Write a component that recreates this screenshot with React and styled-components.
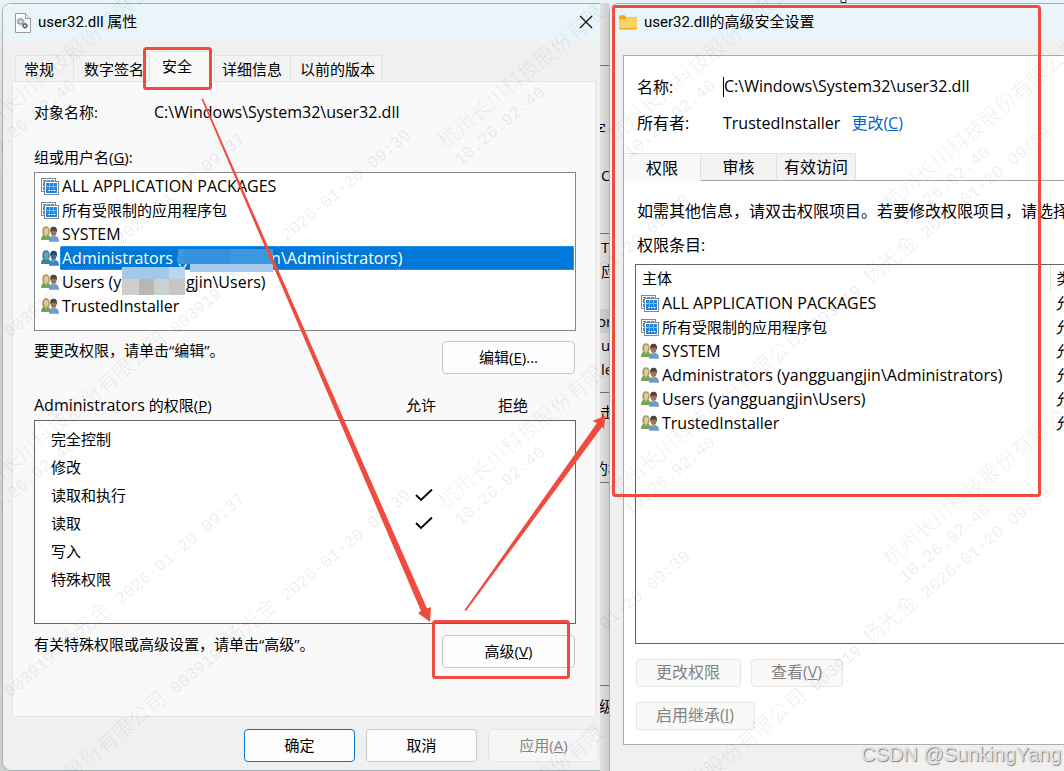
import React, { useState } from 'react';
import styled, { createGlobalStyle, css } from 'styled-components';

const GlobalStyle = createGlobalStyle`
  * {
    box-sizing: border-box;
  }

  body {
    margin: 0;
    overflow: hidden;
    font-family: "Open Sans", "Noto Sans CJK SC", sans-serif;
    font-size: 15px;
    line-height: 20px;
    color: #000;
  }

  button, input {
    font: inherit;
    color: inherit;
  }
`;

const Desktop = styled.div`
  position: relative;
  display: grid;
  grid-template-columns: minmax(0, 598fr) 9px minmax(0, 455fr);
  min-height: 100vh;
  padding: 3px 0 0 2px;
  overflow: hidden;
  background: linear-gradient(#e4f4f7 4px, #ececec 14px, #d0d0d0 180px);
`;

/* ---------- window chrome ---------- */

const Window = styled.section`
  display: flex;
  flex-direction: column;
  min-width: 0;
  overflow: hidden;
  background: #f0f0f0;
  border: 1px solid #a9b0b2;
  border-right: none;
  border-radius: 9px 0 0 ${({ $cornered }) => ($cornered ? '9px' : '0')};
  border-bottom-width: ${({ $cornered }) => ($cornered ? '1px' : '0')};
`;

const TitleBar = styled.header`
  display: flex;
  align-items: center;
  flex: none;
  height: 37px;
  padding: 0 7px 0 ${({ $inset }) => $inset}px;
  background: #e9f5f8;
`;

const Title = styled.h1`
  flex: 1;
  margin: 0 0 0 7px;
  padding-bottom: 2px;
  font-family: Roboto, "Noto Sans CJK SC", sans-serif;
  font-size: 15px;
  font-weight: 400;
  white-space: nowrap;
`;

const CloseButton = styled.button`
  display: flex;
  padding: 0 0 2px;
  border: none;
  background: none;
`;

/* ---------- tabs ---------- */

const PropertyTabs = styled.nav`
  display: grid;
  grid-template-columns: 59px 76px 65px 76px 91px;
  align-items: end;
  flex: none;
  height: 41px;
  margin-bottom: -1px;
  padding-left: 12px;
`;

const PropertyTab = styled.button`
  height: 27px;
  padding: 0 0 0 ${({ $pad }) => $pad}px;
  border: 1px solid #e2e2e2;
  border-left: none;
  background: #f3f3f3;
  text-align: left;
  white-space: nowrap;

  &:first-child {
    border-left: 1px solid #e2e2e2;
  }

  ${({ $active }) =>
    $active &&
    css`
      position: relative;
      height: 31px;
      padding-bottom: 2px;
      border-bottom-color: #f9f9f9;
      background: #f9f9f9;
    `}
`;

const SecurityTabs = styled.nav`
  display: grid;
  grid-template-columns: 77px 76px 79px 1fr;
  height: 28px;
  margin-top: 12px;
  font-size: 16px;

  &::after {
    content: "";
    border-bottom: 1px solid #a5a5a5;
  }
`;

const SecurityTab = styled.button`
  padding: 0;
  border: 1px solid #e0e0e0;
  border-left: none;
  border-bottom-color: #a5a5a5;
  background: #f3f3f3;
  white-space: nowrap;

  ${({ $active }) =>
    $active &&
    css`
      padding-top: 2px;
      border-bottom-color: #f9f9f9;
      background: #f9f9f9;
    `}
`;

/* ---------- properties window ---------- */

// western text runs a size larger than the Chinese labels
const Latin = styled.span`
  font-size: 16px;
`;

const PropertyPanel = styled.main`
  display: flex;
  flex-direction: column;
  margin: 0 4px 0 9px;
  padding: 19px 19px 48px 21px;
  border: 1px solid #e4e4e4;
  background: #f9f9f9;
`;

const ObjectRow = styled.div`
  display: grid;
  grid-template-columns: 120px 1fr;
  line-height: 22px;
`;

const GroupLabel = styled.div`
  margin: 23px 0 4px;
  line-height: 22px;
`;

const GroupList = styled.ul`
  min-height: 159px;
  margin: 0;
  padding: 1px 1px 0 6px;
  border: 1px solid #828790;
  background: #fff;
  list-style: none;
`;

const GroupItem = styled.li`
  display: flex;
  align-items: center;
  gap: 1px;
  height: 24px;
`;

const GroupName = styled.span`
  flex: 1;
  height: 24px;
  padding-left: 1px;
  border: 1px dotted ${({ $selected }) => ($selected ? '#e88a2c' : 'transparent')};
  background: ${({ $selected }) => ($selected ? '#0078d7' : 'transparent')};
  color: ${({ $selected }) => ($selected ? '#fff' : '#000')};
  line-height: 22px;
  white-space: nowrap;
`;

const HintRow = styled.div`
  display: flex;
  justify-content: space-between;
  align-items: flex-start;
  margin-top: ${({ $top }) => $top}px;
  padding-right: 1px;
`;

const Hint = styled.p`
  margin: 0;
  line-height: 18px;
`;

const Button = styled.button`
  width: ${({ $wide }) => ($wide ? '133px' : '111px')};
  height: 33px;
  padding: 0 0 2px;
  border: 1px solid ${({ $primary }) => ($primary ? '#0078d4' : '#c8c8c8')};
  border-radius: 4px;
  background: #fdfdfd;

  &:disabled {
    border-color: #e6e6e6;
    background: #f6f6f6;
    color: #838383;
  }
`;

const PermissionHead = styled.div`
  display: grid;
  grid-template-columns: 1fr 92px 92px 17px;
  margin: 20px 0 4px;
  line-height: 22px;
`;

const HeadCell = styled.span`
  text-align: center;
`;

const PermissionBox = styled.div`
  min-height: 204px;
  padding: 4px 16px 0;
  border: 1px solid #646464;
  background: #fff;
`;

const PermissionTable = styled.table`
  width: 100%;
  border-collapse: collapse;
  table-layout: fixed;

  td {
    width: 92px;
    height: 28px;
    padding: 0 0 0 5px;
    text-align: center;
  }

  td:first-child {
    width: auto;
    padding: 0;
    text-align: left;
  }

  svg {
    display: block;
    margin: 0 auto;
  }
`;

const Footer = styled.footer`
  display: flex;
  justify-content: flex-end;
  gap: 11px;
  padding: 12px 1px 8px;
`;

/* ---------- slice of the window behind ---------- */

const BehindSlice = styled.aside`
  display: flex;
  flex-direction: column;
  min-width: 0;
  overflow: hidden;
  background: linear-gradient(90deg, rgba(0, 0, 0, 0), rgba(0, 0, 0, 0.1)), #e2e2e2;
`;

const SliceRow = styled.div`
  flex: none;
  height: ${({ $height }) => $height}px;
  padding-left: 1px;
  overflow: hidden;
  border-bottom: ${({ $rule }) => ($rule ? '1px solid #6e6e6e' : 'none')};
  background: ${({ $shade }) => ($shade ? 'rgba(0, 0, 0, 0.08)' : 'none')};
  line-height: 24px;
  text-indent: ${({ $indent }) => $indent || 0}px;
  white-space: nowrap;
`;

/* ---------- advanced security window ---------- */

const SecurityPanel = styled.main`
  display: flex;
  flex-direction: column;
  min-width: 0;
  margin: 14px 0 0 13px;
  padding: 13px 0 14px;
  border: 1px solid #adadad;
  border-right: none;
  background: #fff;
`;

const InfoRow = styled.div`
  display: flex;
  align-items: center;
  height: 36px;
  padding: 0 0 1px 13px;
`;

const InfoLabel = styled.label`
  flex: none;
  width: 86px;
  font-size: 16px;
`;

const PathInput = styled.input`
  flex: 1;
  min-width: 0;
  height: 20px;
  padding: 0 0 1px;
  border: none;
  border-left: 1px solid #000;
  outline: none;
  background: none;
  font-size: 16px;
`;

const ChangeLink = styled.a`
  margin-left: 11px;
  color: #0066cc;
  font-size: 16px;
  text-decoration: none;
`;

const Note = styled.p`
  margin: ${({ $top }) => $top}px 0 0 13px;
  font-size: 16px;
  line-height: 22px;
  white-space: nowrap;
`;

const EntryBox = styled.div`
  min-height: 380px;
  margin: 8px 0 0 11px;
  overflow: hidden;
  border: 1px solid #646464;
  border-right: none;
`;

const EntryTable = styled.table`
  width: 100%;
  border-collapse: collapse;
  table-layout: fixed;
  white-space: nowrap;

  th {
    height: 26px;
    padding: 0 0 0 6px;
    font-weight: 400;
    text-align: left;
  }

  th:first-child {
    width: 414px;
    border-right: 1px solid #e2e2e2;
  }

  td {
    height: 24px;
    padding: 0 0 0 6px;
  }

  td:first-child {
    padding-left: 5px;
  }
`;

const Principal = styled.span`
  display: flex;
  align-items: center;
  gap: 3px;
`;

const ActionRow = styled.div`
  display: flex;
  gap: 10px;
  margin: 15px 0 0 12px;
`;

const ActionButton = styled.button`
  height: 28px;
  padding: 0 20px 2px 19px;
  border: 1px solid #e6e6e6;
  border-radius: 4px;
  background: #f9f9f9;
  color: #838383;
  font-size: 16px;
`;

/* ---------- overlays ---------- */

const Overlay = styled.svg`
  position: absolute;
  top: 0;
  left: 0;
  width: 1064px;
  height: 771px;
  pointer-events: none;
`;

const MarkText = styled.text`
  fill: rgba(0, 0, 0, 0.085);
  font-family: "Noto Sans CJK SC", sans-serif;
  font-size: 21px;
  font-weight: 300;
  white-space: pre;
`;

const MarkDigits = styled.tspan`
  font-family: "Liberation Mono", monospace;
  font-size: 17px;
`;

const Credit = styled.div`
  position: absolute;
  right: 3px;
  bottom: 5px;
  color: rgba(240, 240, 240, 0.9);
  font-family: "Liberation Sans", Arial, sans-serif;
  font-size: 20px;
  line-height: 24px;
  text-shadow: 1px 1px 1px rgba(0, 0, 0, 0.45), 0 0 1px rgba(0, 0, 0, 0.2);
`;

/* ---------- icons ---------- */

const DllIcon = () => (
  <svg width="16" height="20" viewBox="0 0 16 20">
    <path d="M.5 .5h10l5 5v14H.5z" fill="#fbfbfb" stroke="#9a9a9a" />
    <path d="M10.500 .5v5h5" fill="#ececec" stroke="#9a9a9a" />
    <circle cx="5.500" cy="8.500" r="2.200" fill="none" stroke="#93a4b3" strokeWidth="1.800" />
    <circle cx="5.500" cy="8.500" r="3.400" fill="none" stroke="#93a4b3" strokeWidth="1.200" strokeDasharray="1.300 1.370" />
    <circle cx="10" cy="12.800" r="1.700" fill="none" stroke="#5f6a75" strokeWidth="1.500" />
    <circle cx="10" cy="12.800" r="2.700" fill="none" stroke="#5f6a75" strokeWidth="1" strokeDasharray="1.060 1.060" />
  </svg>
);

const FolderIcon = () => (
  <svg width="18" height="15" viewBox="0 0 18 15">
    <path d="M0 1.500Q0 .3 1.200 .3H5.500L7.500 2.300H16.800Q18 2.300 18 3.500V8H0z" fill="#f2a81d" />
    <path d="M0 4.500H6L7.800 2.800H17Q18 2.800 18 3.800V13.200Q18 14.500 16.800 14.500H1.200Q0 14.500 0 13.200z" fill="#ffd361" />
    <path d="M0 13.200Q0 14.500 1.200 14.500H16.800Q18 14.500 18 13.200z" fill="#eda921" />
  </svg>
);

const CloseIcon = () => (
  <svg width="14" height="14" viewBox="0 0 14 14">
    <path d="M1 1L13 13M13 1L1 13" stroke="#111" strokeWidth="1.200" />
  </svg>
);

const PackageIcon = () => (
  <svg width="18" height="17" viewBox="0 0 18 17">
    <rect x=".5" y=".5" width="14" height="13" fill="#fff" stroke="#85888b" />
    <path d="M2 2h3v1H2zM6 2h3v1H6zM10 2h3v1h-3zM2 4h1v4H2zM2 9h1v3H2z" fill="#2b90e2" />
    <rect x="3.500" y="3.500" width="14" height="13" fill="#fff" stroke="#85888b" />
    <rect x="5" y="5" width="11" height="10" fill="#1e88e0" />
    <path d="M8.500 5v6M12.500 5v6M5 8.500h11" stroke="#79bcf2" />
    <path d="M7 12.500h2M10 12.500h1.500M12.500 12.500h2" stroke="#fff" />
  </svg>
);

const PeopleIcon = ({ selected }) => {
  const c = selected
    ? { hair: '#3f7f9c', face: '#6c9fb8', green: '#2d8a93', dark: '#1f4f78', skin: '#3d6d97', blue: '#3b86c9', shirt: '#79b1de' }
    : { hair: '#ad9a58', face: '#e3cba4', green: '#7aa44e', dark: '#54463b', skin: '#a3714c', blue: '#6c9bd0', shirt: '#a9c6e6' };
  return (
    <svg width="18" height="16" viewBox="0 0 18 16">
      <path d="M1.500 8.500Q.5 0 5 .2Q9.400 0 8.500 8.500z" fill={c.hair} />
      <path d="M0 14Q0 9.500 3 8.500L7 8.500Q9.500 9.500 9.500 14z" fill={c.green} />
      <path d="M3.500 7.500h3L5 11z" fill={c.face} />
      <ellipse cx="5.200" cy="5" rx="2.100" ry="3" fill={c.face} />
      <path d="M8 15.800Q7.500 10.800 11 10h3.500Q18 10.800 18 15.800z" fill={c.blue} />
      <path d="M11.500 9.500h2.200L12.600 12z" fill={c.shirt} />
      <ellipse cx="12.600" cy="6.300" rx="2.800" ry="3.800" fill={c.skin} />
      <path d="M9.400 6.500Q8.300 .7 12.500 .8Q16.900 .7 15.800 6.700Q15.200 4.500 13 4.600Q10.200 4.500 9.400 6.500z" fill={c.dark} />
    </svg>
  );
};

const CheckIcon = () => (
  <svg width="18" height="14" viewBox="0 0 18 14">
    <path d="M1 7L6 12L17 1.500" fill="none" stroke="#000" strokeWidth="1.800" />
  </svg>
);

/* ---------- data ---------- */

const tabs = [
  { name: '常规', pad: 8 },
  { name: '数字签名', pad: 10 },
  { name: '安全', pad: 12 },
  { name: '详细信息', pad: 7 },
  { name: '以前的版本', pad: 9 },
];

const groups = [
  { name: 'ALL APPLICATION PACKAGES', pack: true },
  { name: '所有受限制的应用程序包', pack: true, chinese: true },
  { name: 'SYSTEM' },
  { name: 'Administrators (yangguangjin\\Administrators)' },
  { name: 'Users (yangguangjin\\Users)' },
  { name: 'TrustedInstaller' },
];

const permissions = [
  { name: '完全控制' },
  { name: '修改' },
  { name: '读取和执行', allow: true },
  { name: '读取', allow: true },
  { name: '写入' },
  { name: '特殊权限' },
];

const sliceRows = [
  { height: 30 },
  { height: 33, rule: true },
  { height: 51 },
  { height: 24, text: '字', indent: -10 },
  { height: 22 },
  { height: 24, text: 'C' },
  { height: 46 },
  { height: 1, rule: true },
  { height: 1 },
  { height: 24, text: 'T' },
  { height: 24, text: '应' },
  { height: 26 },
  { height: 24, text: 'or', indent: -4, shade: true },
  { height: 24, text: 'u' },
  { height: 24, text: 'le' },
  { height: 12, rule: true },
  { height: 7 },
  { height: 24, text: '击', indent: -1 },
  { height: 32 },
  { height: 24, text: '的权', indent: -8 },
  { height: 3, rule: true },
  { height: 203, rule: true },
  { height: 8 },
  { height: 24, text: '级', indent: -2 },
];

// start point of every line, the address line sits just below it
const companyMarks = [
  { x: -25, y: 143 },
  { x: -25, y: 503 },
  { x: -25, y: 863 },
  { x: 445, y: 150, short: true },
  { x: 445, y: 510, short: true },
  { x: 445, y: 870, short: true },
  { x: 615, y: 143 },
  { x: 615, y: 500 },
  { x: 615, y: 860 },
  { x: 890, y: 210 },
  { x: 890, y: 567 },
];

const userMarks = [
  { x: 10, y: 338 },
  { x: 10, y: 698 },
];

const timeMarks = [
  { x: 605, y: 274 },
  { x: 605, y: 630 },
];

const Key = ({ children }) => <>(<u>{children}</u>)</>;

/* ---------- parts ---------- */

function GroupIcon({ group, selected }) {
  return group.pack ? <PackageIcon /> : <PeopleIcon selected={selected} />;
}

function GroupText({ group }) {
  return group.chinese ? group.name : <Latin>{group.name}</Latin>;
}

function PropertiesWindow() {
  const [selected, setSelected] = useState(3);

  return (
    <Window $cornered>
      <TitleBar $inset={12}>
        <DllIcon />
        <Title>user32.dll 属性</Title>
        <CloseButton aria-label="关闭"><CloseIcon /></CloseButton>
      </TitleBar>
      <PropertyTabs>
        {tabs.map((tab) => (
          <PropertyTab key={tab.name} $pad={tab.pad} $active={tab.name === '安全'}>
            {tab.name}
          </PropertyTab>
        ))}
      </PropertyTabs>
      <PropertyPanel>
        <ObjectRow>
          <span>对象名称:</span>
          <Latin>C:\Windows\System32\user32.dll</Latin>
        </ObjectRow>
        <GroupLabel>组或用户名<Key>G</Key>:</GroupLabel>
        <GroupList>
          {groups.map((group, index) => (
            <GroupItem key={group.name} onClick={() => setSelected(index)}>
              <GroupIcon group={group} selected={index === selected} />
              <GroupName $selected={index === selected}><GroupText group={group} /></GroupName>
            </GroupItem>
          ))}
        </GroupList>
        <HintRow $top={10}>
          <Hint>要更改权限，请单击“编辑”。</Hint>
          <Button $wide>编辑<Key>E</Key>...</Button>
        </HintRow>
        <PermissionHead>
          <span><Latin>Administrators</Latin> 的权限<Key>P</Key></span>
          <HeadCell>允许</HeadCell>
          <HeadCell>拒绝</HeadCell>
        </PermissionHead>
        <PermissionBox>
          <PermissionTable>
            <tbody>
              {permissions.map((item) => (
                <tr key={item.name}>
                  <td>{item.name}</td>
                  <td>{item.allow && <CheckIcon />}</td>
                  <td />
                </tr>
              ))}
            </tbody>
          </PermissionTable>
        </PermissionBox>
        <HintRow $top={11}>
          <Hint>有关特殊权限或高级设置，请单击“高级”。</Hint>
          <Button $wide>高级<Key>V</Key></Button>
        </HintRow>
      </PropertyPanel>
      <Footer>
        <Button $primary>确定</Button>
        <Button>取消</Button>
        <Button disabled>应用<Key>A</Key></Button>
      </Footer>
    </Window>
  );
}

function SecurityWindow() {
  return (
    <Window>
      <TitleBar $inset={9}>
        <FolderIcon />
        <Title>user32.dll的高级安全设置</Title>
      </TitleBar>
      <SecurityPanel>
        <InfoRow>
          <InfoLabel htmlFor="object-path">名称:</InfoLabel>
          <PathInput id="object-path" readOnly value="C:\Windows\System32\user32.dll" />
        </InfoRow>
        <InfoRow>
          <InfoLabel as="span">所有者:</InfoLabel>
          <Latin>TrustedInstaller</Latin>
          <ChangeLink href="#owner">更改<Key>C</Key></ChangeLink>
        </InfoRow>
        <SecurityTabs>
          <SecurityTab $active>权限</SecurityTab>
          <SecurityTab>审核</SecurityTab>
          <SecurityTab>有效访问</SecurityTab>
        </SecurityTabs>
        <Note $top={19}>如需其他信息，请双击权限项目。若要修改权限项目，请选择</Note>
        <Note $top={12}>权限条目:</Note>
        <EntryBox>
          <EntryTable>
            <thead>
              <tr>
                <th>主体</th>
                <th>类型</th>
              </tr>
            </thead>
            <tbody>
              {groups.map((group) => (
                <tr key={group.name}>
                  <td>
                    <Principal>
                      <GroupIcon group={group} />
                      <GroupText group={group} />
                    </Principal>
                  </td>
                  <td>允许</td>
                </tr>
              ))}
            </tbody>
          </EntryTable>
        </EntryBox>
        <ActionRow>
          <ActionButton disabled>更改权限</ActionButton>
          <ActionButton disabled>查看<Key>V</Key></ActionButton>
        </ActionRow>
        <ActionRow>
          <ActionButton disabled>启用继承<Key>I</Key></ActionButton>
        </ActionRow>
      </SecurityPanel>
    </Window>
  );
}

function Watermarks() {
  return (
    <Overlay viewBox="0 0 1064 771" aria-hidden="true">
      {companyMarks.map(({ x, y, short }) => (
        <g key={`${x}-${y}`}>
          <MarkText transform={`translate(${x} ${y}) rotate(-40)`}>
            {short ? (
              '杭州长川科技股份有限'
            ) : (
              <>
                杭州长川科技股份有限公司<MarkDigits> 003919 </MarkDigits>
                杨光金<MarkDigits> 2026-01-20 09:39</MarkDigits>
              </>
            )}
          </MarkText>
          <MarkText transform={`translate(${x + 15} ${y + 16}) rotate(-40)`}>
            <MarkDigits>10.26.92.40</MarkDigits>
          </MarkText>
        </g>
      ))}
      {userMarks.map(({ x, y }) => (
        <MarkText key={`${x}-${y}`} transform={`translate(${x} ${y}) rotate(-40)`}>
          <MarkDigits>003919 </MarkDigits>
          杨光金<MarkDigits> 2026-01-20 09:37</MarkDigits>
        </MarkText>
      ))}
      {timeMarks.map(({ x, y }) => (
        <MarkText key={`${x}-${y}`} transform={`translate(${x} ${y}) rotate(-40)`}>
          <MarkDigits>01-20 09:38</MarkDigits>
        </MarkText>
      ))}
    </Overlay>
  );
}

function Annotations() {
  return (
    <Overlay viewBox="0 0 1064 771" aria-hidden="true">
      <path d="M841 0V2.500H846V0" fill="#fff" stroke="#222" />
      {/* mosaic over the account name */}
      <rect x="178" y="249" width="95" height="15" fill="#3f96e0" />
      <rect x="184" y="249" width="45" height="15" fill="#3890dc" />
      <rect x="190" y="264" width="83" height="8" fill="#a6cbef" />
      <rect x="122" y="267" width="63" height="12" fill="#a3c8e8" />
      <rect x="169" y="267" width="16" height="12" fill="#b7d7f1" />
      <rect x="122" y="279" width="17" height="16" fill="#d0cdcd" />
      <rect x="139" y="279" width="15" height="16" fill="#b9b6b4" />
      <rect x="154" y="279" width="15" height="16" fill="#cdd0d2" />
      <rect x="169" y="279" width="16" height="16" fill="#c8c5c4" />
      {/* callouts */}
      <g fill="none" stroke="#f04b3f" strokeWidth="3">
        <rect x="144.500" y="48.500" width="66" height="40" rx="2" />
        <rect x="433.500" y="621.500" width="135" height="56" rx="2" />
        <rect x="613.500" y="6.500" width="426" height="489" rx="2" />
      </g>
      <g fill="#f04b3f">
        <path d="M201.500 99L203 98.500L427 608.500L431 607L430 622L418 613L421 611z" />
        <path d="M464.500 610L466 611L602 427L604 429L605.500 415.500L592.500 421L597 423z" />
      </g>
    </Overlay>
  );
}

function App() {
  return (
    <>
      <GlobalStyle />
      <Desktop>
        <PropertiesWindow />
        <BehindSlice aria-hidden="true">
          {sliceRows.map((row, index) => (
            <SliceRow
              key={index}
              $height={row.height}
              $rule={row.rule}
              $shade={row.shade}
              $indent={row.indent}
            >
              {row.text}
            </SliceRow>
          ))}
        </BehindSlice>
        <SecurityWindow />
        <Watermarks />
        <Annotations />
        <Credit>CSDN @SunkingYang</Credit>
      </Desktop>
    </>
  );
}

export default App;
